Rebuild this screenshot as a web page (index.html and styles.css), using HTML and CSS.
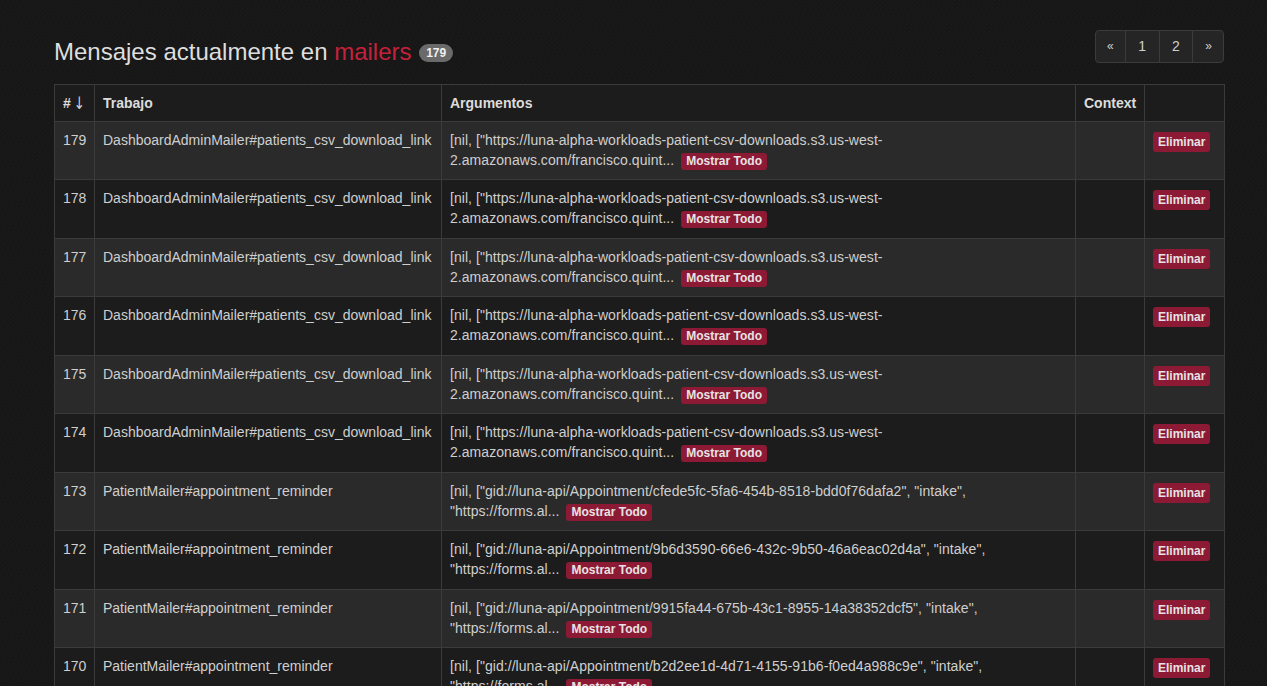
FILE: index.html
```html
<!DOCTYPE html>
<html lang="es">
<head>
<meta charset="utf-8">
<title>Sidekiq - mailers</title>
<link rel="stylesheet" href="styles.css">
</head>
<body>
<div class="page">
  <div class="header">
    <h3 class="title">Mensajes actualmente en <span class="queue">mailers</span> <span class="count">179</span></h3>
    <ul class="pagination">
      <li class="edge-l"><a href="#">«</a></li>
      <li><a href="#">1</a></li>
      <li><a href="#">2</a></li>
      <li class="edge-r"><a href="#">»</a></li>
    </ul>
  </div>
  <table class="jobs">
    <colgroup>
      <col class="c-num"><col class="c-job"><col class="c-args"><col class="c-ctx"><col class="c-act">
    </colgroup>
    <thead>
      <tr><th># <span class="arrow">↓</span></th><th>Trabajo</th><th>Argumentos</th><th>Context</th><th></th></tr>
    </thead>
    <tbody>
      <tr><td>179</td><td>DashboardAdminMailer#patients_csv_download_link</td><td>[nil, ["https://luna-alpha-workloads-patient-csv-downloads.s3.us-west-<br>2.amazonaws.com/francisco.quint... <span class="more">Mostrar Todo</span></td><td></td><td><span class="del">Eliminar</span></td></tr>
      <tr><td>178</td><td>DashboardAdminMailer#patients_csv_download_link</td><td>[nil, ["https://luna-alpha-workloads-patient-csv-downloads.s3.us-west-<br>2.amazonaws.com/francisco.quint... <span class="more">Mostrar Todo</span></td><td></td><td><span class="del">Eliminar</span></td></tr>
      <tr><td>177</td><td>DashboardAdminMailer#patients_csv_download_link</td><td>[nil, ["https://luna-alpha-workloads-patient-csv-downloads.s3.us-west-<br>2.amazonaws.com/francisco.quint... <span class="more">Mostrar Todo</span></td><td></td><td><span class="del">Eliminar</span></td></tr>
      <tr><td>176</td><td>DashboardAdminMailer#patients_csv_download_link</td><td>[nil, ["https://luna-alpha-workloads-patient-csv-downloads.s3.us-west-<br>2.amazonaws.com/francisco.quint... <span class="more">Mostrar Todo</span></td><td></td><td><span class="del">Eliminar</span></td></tr>
      <tr><td>175</td><td>DashboardAdminMailer#patients_csv_download_link</td><td>[nil, ["https://luna-alpha-workloads-patient-csv-downloads.s3.us-west-<br>2.amazonaws.com/francisco.quint... <span class="more">Mostrar Todo</span></td><td></td><td><span class="del">Eliminar</span></td></tr>
      <tr><td>174</td><td>DashboardAdminMailer#patients_csv_download_link</td><td>[nil, ["https://luna-alpha-workloads-patient-csv-downloads.s3.us-west-<br>2.amazonaws.com/francisco.quint... <span class="more">Mostrar Todo</span></td><td></td><td><span class="del">Eliminar</span></td></tr>
      <tr><td>173</td><td>PatientMailer#appointment_reminder</td><td>[nil, ["gid://luna-api/Appointment/cfede5fc-5fa6-454b-8518-bdd0f76dafa2", "intake",<br>"https://forms.al... <span class="more">Mostrar Todo</span></td><td></td><td><span class="del">Eliminar</span></td></tr>
      <tr><td>172</td><td>PatientMailer#appointment_reminder</td><td>[nil, ["gid://luna-api/Appointment/9b6d3590-66e6-432c-9b50-46a6eac02d4a", "intake",<br>"https://forms.al... <span class="more">Mostrar Todo</span></td><td></td><td><span class="del">Eliminar</span></td></tr>
      <tr><td>171</td><td>PatientMailer#appointment_reminder</td><td>[nil, ["gid://luna-api/Appointment/9915fa44-675b-43c1-8955-14a38352dcf5", "intake",<br>"https://forms.al... <span class="more">Mostrar Todo</span></td><td></td><td><span class="del">Eliminar</span></td></tr>
      <tr><td>170</td><td>PatientMailer#appointment_reminder</td><td>[nil, ["gid://luna-api/Appointment/b2d2ee1d-4d71-4155-91b6-f0ed4a988c9e", "intake",<br>"https://forms.al... <span class="more">Mostrar Todo</span></td><td></td><td><span class="del">Eliminar</span></td></tr>
    </tbody>
  </table>
</div>
</body>
</html>
```
FILE: styles.css
```css
html, body {
  margin: 0;
  padding: 0;
  background-color: #171717;
  background-image:
    repeating-linear-gradient(37deg, rgba(255,255,255,0.012) 0 1px, transparent 1px 3px),
    repeating-linear-gradient(-53deg, rgba(0,0,0,0.05) 0 1px, transparent 1px 4px);
  color: #cfcfcf;
  font-family: "Liberation Sans", Arial, Helvetica, sans-serif;
  font-size: 14px;
  line-height: 20px;
  overflow: hidden;
}

.page {
  width: 1170px;
  margin-left: 54px;
}

.header {
  display: flex;
  justify-content: space-between;
  align-items: flex-start;
  height: 84px;
}

.title {
  margin: 39px 0 0 0;
  font-size: 24px;
  line-height: 26px;
  font-weight: normal;
  color: #dedede;
}

.queue {
  color: #c5213b;
}

.count {
  display: inline-block;
  vertical-align: 3px;
  margin-left: 1px;
  padding: 0 7px;
  height: 18px;
  line-height: 18px;
  border-radius: 9px;
  background: #6a6a6a;
  color: #f0f0f0;
  font-size: 12px;
  font-weight: bold;
}

.pagination {
  display: flex;
  list-style: none;
  margin: 30px 0 0 0;
  padding: 0;
  border: 1px solid #3b3b3b;
  border-radius: 4px;
  background: #252525;
  overflow: hidden;
}

.pagination li + li {
  border-left: 1px solid #3b3b3b;
}

.pagination a {
  display: block;
  height: 31px;
  line-height: 31px;
  padding: 0 12.5px;
  color: #d0d0d0;
  text-decoration: none;
  font-size: 14px;
}

.pagination .edge-l a {
  font-size: 12px;
  padding: 0 11px;
}

.pagination .edge-r a {
  font-size: 12px;
  padding: 0 11px 0 12px;
}

.jobs {
  width: 1170px;
  table-layout: fixed;
  border-collapse: collapse;
  border: 1px solid #3b3b3b;
}

.c-num { width: 40px; }
.c-job { width: 347px; }
.c-args { width: 634px; }
.c-ctx { width: 69px; }
.c-act { width: 80px; }

.jobs th,
.jobs td {
  border: 1px solid #3b3b3b;
  padding: 8px;
  text-align: left;
  vertical-align: top;
}

.jobs th {
  font-weight: bold;
  color: #dcdcdc;
  background: #1c1c1c;
  white-space: nowrap;
  height: 20px;
}

.arrow {
  font-weight: normal;
  font-size: 17px;
  line-height: 20px;
  color: #d0d0d0;
  font-family: "DejaVu Sans", sans-serif;
  display: inline-block;
  transform: scaleX(0.8);
  vertical-align: top;
  margin-left: -3px;
}

.jobs tbody tr {
  height: 58.45px;
}

.jobs tbody tr:nth-child(odd) {
  background: #2a2a2a;
}

.jobs tbody tr:nth-child(even) {
  background: #1c1c1c;
}

.jobs td:nth-child(3) {
  letter-spacing: 0.05px;
}

.more,
.del {
  display: inline-block;
  background: #8c1a35;
  color: #e8e2e4;
  font-weight: bold;
  font-size: 12px;
  border-radius: 3px;
  letter-spacing: 0;
}

.more {
  padding: 0 5px;
  height: 17px;
  line-height: 17px;
  margin-left: 3px;
}

.del {
  margin-top: 2px;
  padding: 0 5px;
  height: 20px;
  line-height: 20px;
}
```
